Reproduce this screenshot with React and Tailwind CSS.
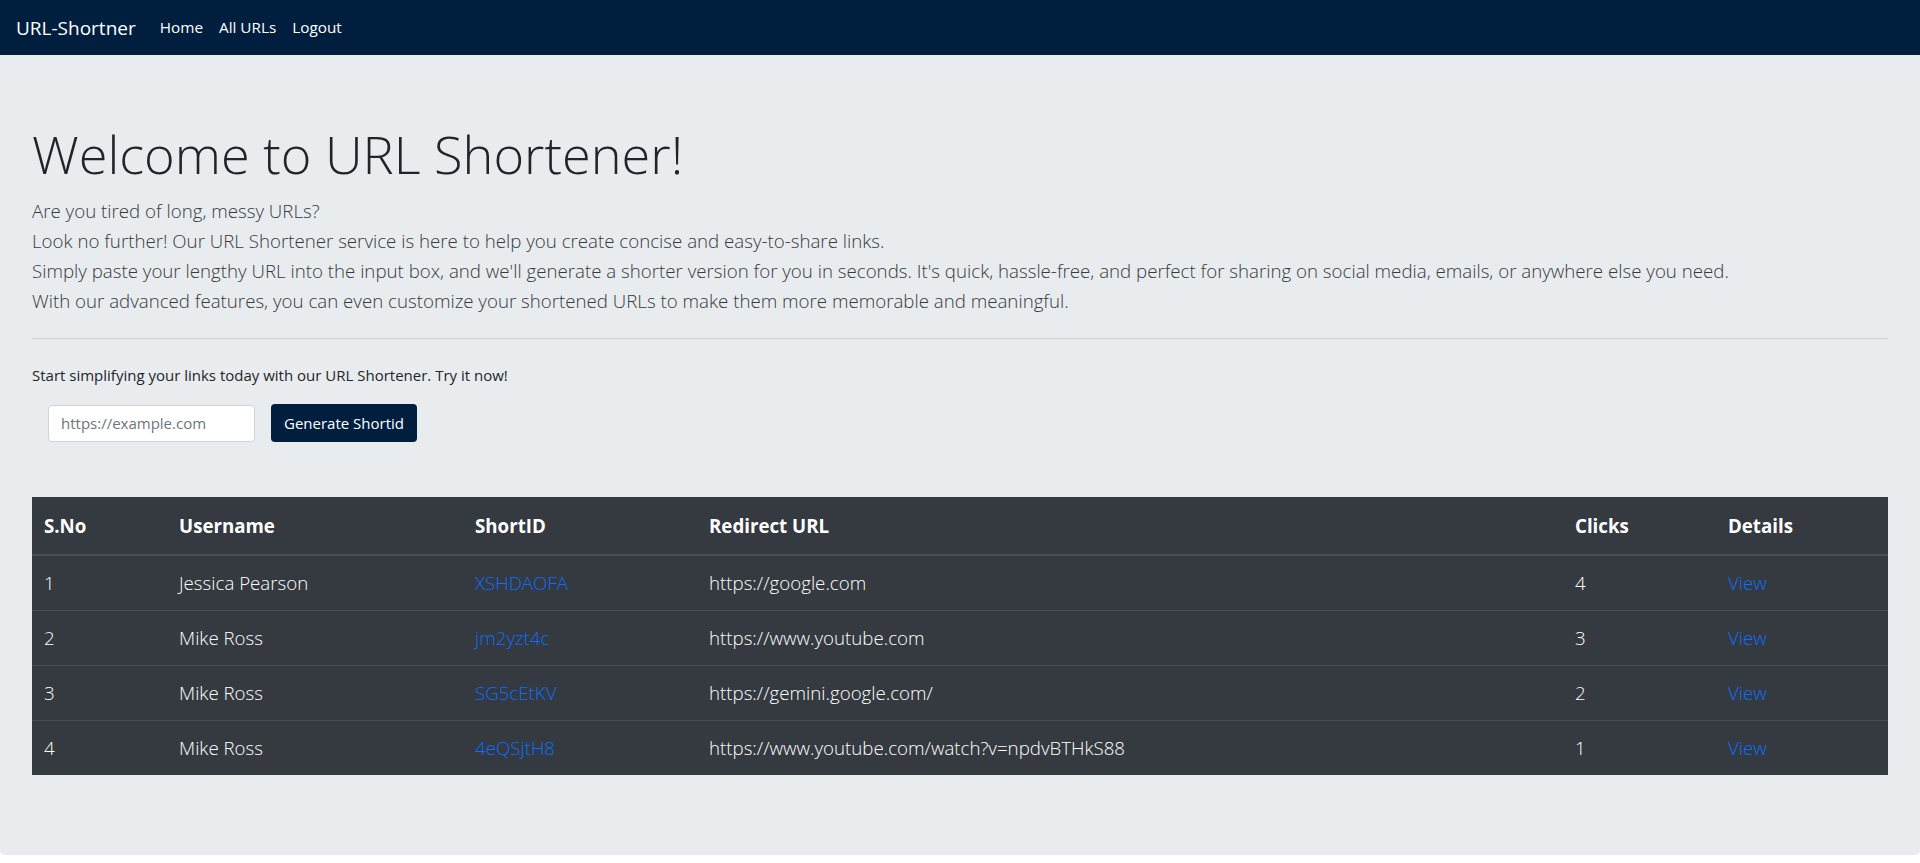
import React from "react";

const rows = [
  { n: 1, user: "Jessica Pearson", id: "XSHDAOFA", url: "https://google.com", clicks: 4 },
  { n: 2, user: "Mike Ross", id: "jm2yzt4c", url: "https://www.youtube.com", clicks: 3 },
  { n: 3, user: "Mike Ross", id: "SG5cEtKV", url: "https://gemini.google.com/", clicks: 2 },
  { n: 4, user: "Mike Ross", id: "4eQSjtH8", url: "https://www.youtube.com/watch?v=npdvBTHkS88", clicks: 1 },
];

export default function App() {
  return (
    <div className="min-h-[863px] bg-white text-[#212529]" style={{ fontFamily: '"Open Sans", "Noto Sans", sans-serif' }}>
      <nav className="flex h-[55px] items-center bg-[#001f3f] px-4">
        <span className="mr-4 text-[19px] leading-[30px] text-white">URL-Shortner</span>
        <a className="px-2 text-[15.3px] text-white">Home</a>
        <a className="px-2 text-[15.3px] text-white">All URLs</a>
        <a className="px-2 text-[15.3px] text-white">Logout</a>
      </nav>

      <div className="mb-[10px] rounded-b-[5px] bg-[#e9ecef] px-8 pt-[66px] pb-[64px]">
        <h1 className="mb-[10px] text-[52.3px] font-light leading-[65px] text-[#212529]">Welcome to URL Shortener!</h1>
        <div className="text-[18.7px] font-light leading-[30px] text-[#343a40]">
          <p>Are you tired of long, messy URLs?</p>
          <p>Look no further! Our URL Shortener service is here to help you create concise and easy-to-share links.</p>
          <p>Simply paste your lengthy URL into the input box, and we'll generate a shorter version for you in seconds. It's quick, hassle-free, and perfect for sharing on social media, emails, or anywhere else you need.</p>
          <p>With our advanced features, you can even customize your shortened URLs to make them more memorable and meaningful.</p>
        </div>
        <hr className="mt-[22px] mb-6 border-t border-[#cfd2d5]" />
        <p className="mb-[17px] text-[15px] leading-6 text-[#212529]">Start simplifying your links today with our URL Shortener. Try it now!</p>
        <div className="flex items-center gap-4 pl-4">
          <input
            placeholder="https://example.com"
            className="h-[37px] w-[207px] rounded-[4px] border border-[#ced4da] bg-white px-3 text-[15px] placeholder:text-[#6c757d] outline-none"
          />
          <button className="h-[38px] w-[146px] rounded-[4px] bg-[#001f3f] text-[15px] text-white">Generate Shortid</button>
        </div>

        <table className="mt-[55px] mb-4 w-full table-fixed bg-[#343a40] text-[18.7px] text-white">
          <colgroup>
            <col className="w-[135px]" />
            <col className="w-[296px]" />
            <col className="w-[234px]" />
            <col className="w-[866px]" />
            <col className="w-[153px]" />
            <col />
          </colgroup>
          <thead>
            <tr className="border-b-2 border-[#454d55]">
              <th className="px-3 pt-[14px] pb-[13px] text-left font-bold leading-[30px]">S.No</th>
              <th className="px-3 pt-[14px] pb-[13px] text-left font-bold leading-[30px]">Username</th>
              <th className="px-3 pt-[14px] pb-[13px] text-left font-bold leading-[30px]">ShortID</th>
              <th className="px-3 pt-[14px] pb-[13px] text-left font-bold leading-[30px]">Redirect URL</th>
              <th className="px-3 pt-[14px] pb-[13px] text-left font-bold leading-[30px]">Clicks</th>
              <th className="px-3 pt-[14px] pb-[13px] text-left font-bold leading-[30px]">Details</th>
            </tr>
          </thead>
          <tbody className="font-light">
            {rows.map((r, i) => (
              <tr key={r.n} className={i === 0 ? "" : "border-t border-[#454d55]"}>
                <td className="px-3 py-3 leading-[30px]">{r.n}</td>
                <td className="px-3 py-3 leading-[30px]">{r.user}</td>
                <td className="px-3 py-3 leading-[30px] text-[#0d6efd]">{r.id}</td>
                <td className="px-3 py-3 leading-[30px]">{r.url}</td>
                <td className="px-3 py-3 leading-[30px]">{r.clicks}</td>
                <td className="px-3 py-3 leading-[30px] text-[#0d6efd]">View</td>
              </tr>
            ))}
          </tbody>
        </table>
      </div>
    </div>
  );
}
